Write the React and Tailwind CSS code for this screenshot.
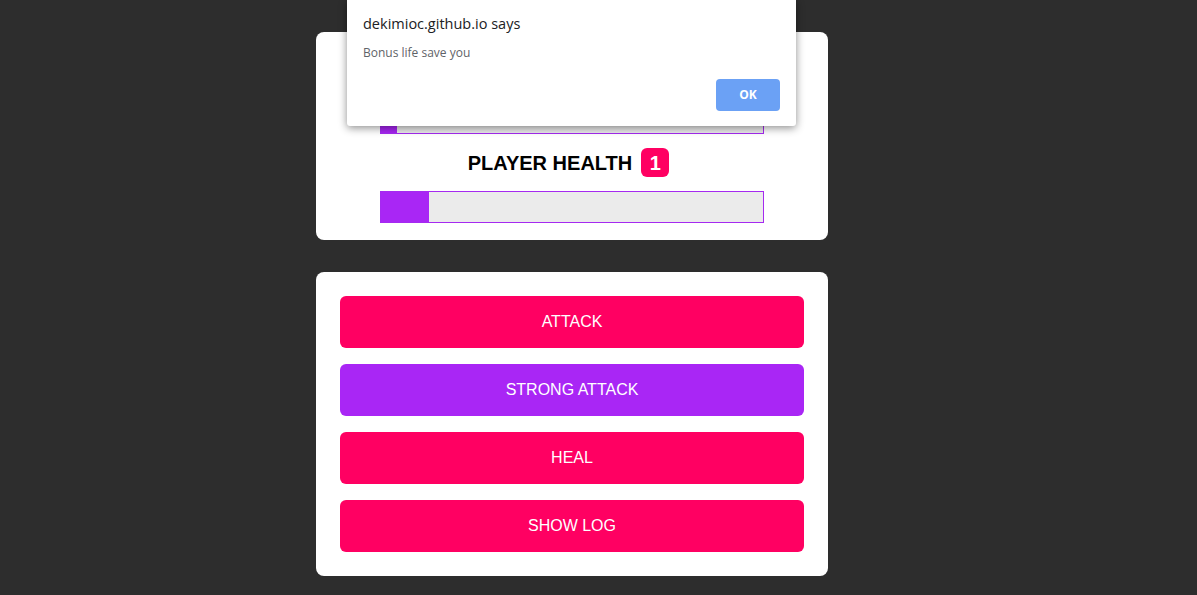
import { useState } from 'react';

function HealthBar({ value }) {
    return (
        <div className="w-[384px] h-8 mx-auto border border-[#a52af0] bg-[#ebebeb] flex">
            <div className="h-full bg-[#a926f5]" style={{ width: value + '%' }}></div>
        </div>
    );
}

function App() {
    const [monsterHealth] = useState(4.2);
    const [playerHealth] = useState(12.6);
    const [bonusLife] = useState(1);

    const buttons = [
        { label: 'ATTACK', cls: 'bg-[#ff0062]' },
        { label: 'STRONG ATTACK', cls: 'bg-[#a926f5]' },
        { label: 'HEAL', cls: 'bg-[#ff0062]' },
        { label: 'SHOW LOG', cls: 'bg-[#ff0062]' },
    ];

    return (
        <div className="relative min-h-[595px] w-full bg-[#2d2d2d] font-['Liberation_Sans',Arial,sans-serif] overflow-hidden">
            <div className="w-[512px] ml-[316px] pt-8 flex flex-col gap-8">
                <section className="bg-white rounded-lg pt-[13px] pb-[17px]">
                    <div className="h-[57px] flex items-center justify-center">
                        <h2 className="text-[20px] font-bold text-black">MONSTER HEALTH</h2>
                    </div>
                    <HealthBar value={monsterHealth} />
                    <div className="h-[57px] flex items-center justify-center gap-[9px] pr-[7px]">
                        <h2 className="text-[20px] font-bold text-black">PLAYER HEALTH</h2>
                        <span className="w-7 h-[29px] rounded-md bg-[#ff0062] text-white text-[20px] font-bold flex items-center justify-center">
                            {bonusLife}
                        </span>
                    </div>
                    <HealthBar value={playerHealth} />
                </section>

                <section className="bg-white rounded-lg p-6 flex flex-col gap-4">
                    {buttons.map((b) => (
                        <button
                            key={b.label}
                            className={'h-[52px] w-full rounded-md text-white text-[16px] ' + b.cls}
                        >
                            {b.label}
                        </button>
                    ))}
                </section>
            </div>

            {/* browser alert */}
            <div className="absolute top-0 left-[347px] w-[449px] h-[126px] bg-white rounded-b-[3px] shadow-[0_2px_8px_rgba(0,0,0,0.45)] font-['Open_Sans',sans-serif] px-4 pt-[14px]">
                <p className="text-[14.5px] text-[#202124] leading-5">dekimioc.github.io says</p>
                <p className="text-[12px] text-[#5f6368] mt-[11px] leading-4">Bonus life save you</p>
                <div className="flex justify-end mt-[18px]">
                    <button className="w-16 h-8 rounded bg-[#6ba1f5] text-white text-[12px] font-bold">
                        OK
                    </button>
                </div>
            </div>
        </div>
    );
}

export default App;
